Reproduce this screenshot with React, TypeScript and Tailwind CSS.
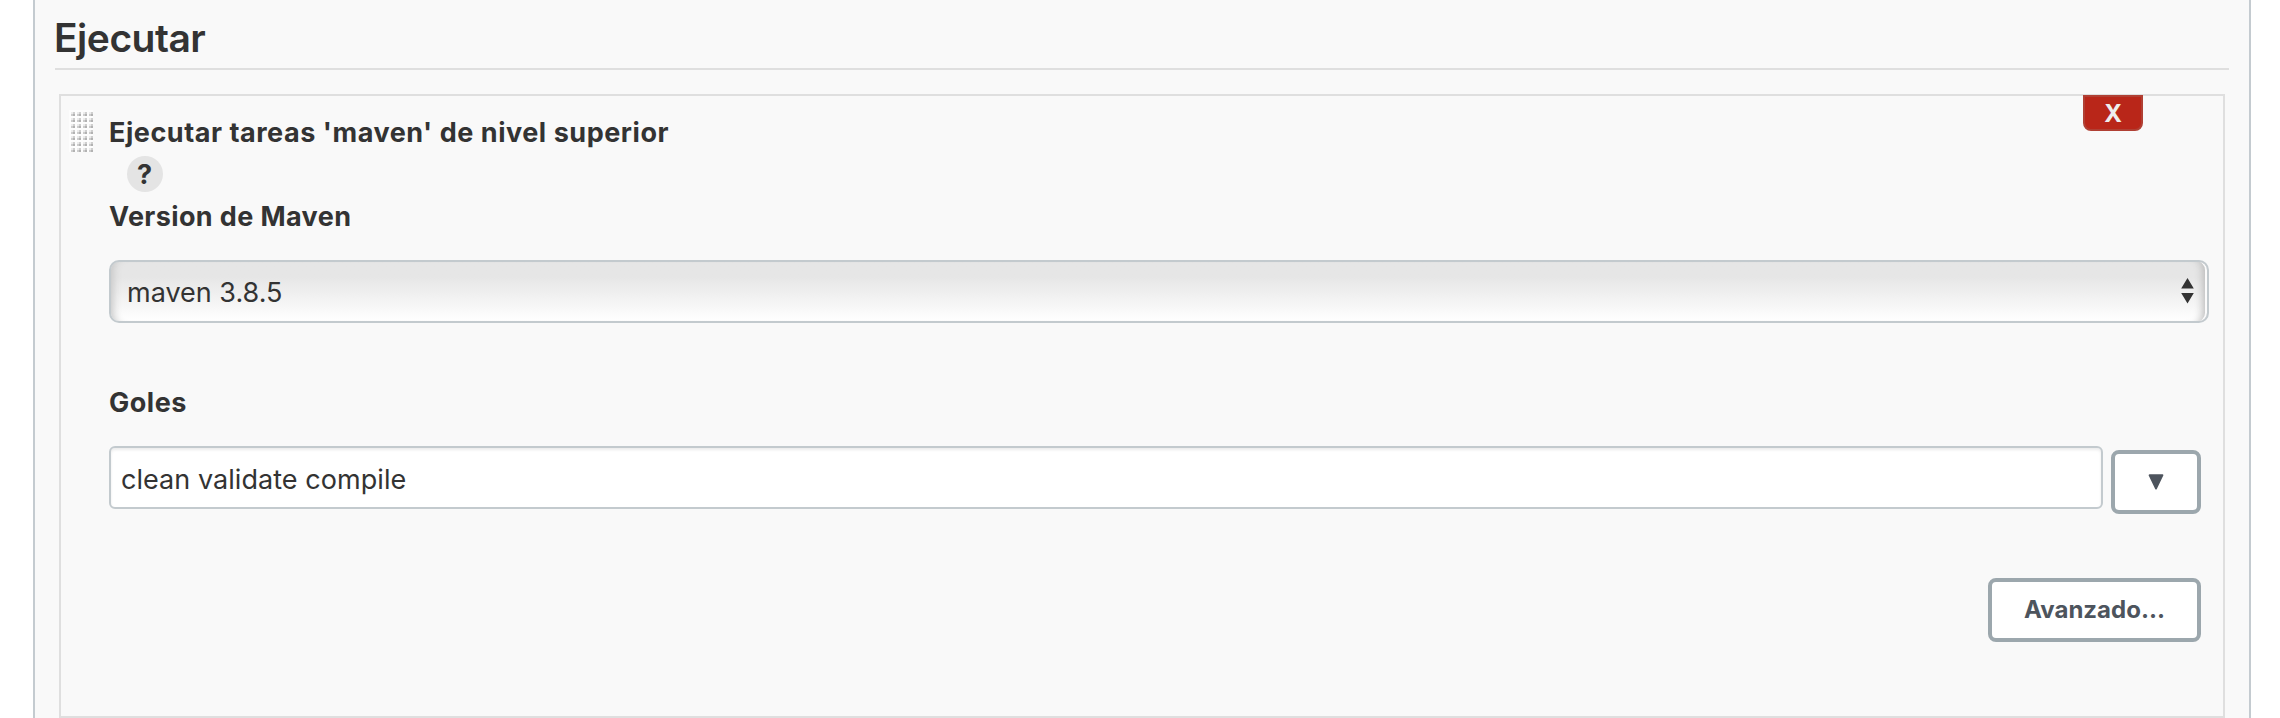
import React from "react";

function DragGrip() {
  return (
    <svg className="h-[42px] w-6 shrink-0" viewBox="0 0 24 42" shapeRendering="crispEdges">
      <defs>
        <pattern id="grip" width="6" height="6" patternUnits="userSpaceOnUse">
          <rect width="6" height="6" fill="#fdfdfd" />
          <rect x="4" y="2" width="2" height="2" fill="#cfcfcf" />
          <rect x="2" y="4" width="2" height="2" fill="#cdcdcd" />
          <rect x="2" y="2" width="2" height="2" fill="#ececec" />
          <rect x="4" y="4" width="2" height="2" fill="#b2b2b2" />
        </pattern>
      </defs>
      <rect width="24" height="42" fill="url(#grip)" />
    </svg>
  );
}

function Label({ children, className = "" }: { children: React.ReactNode; className?: string }) {
  return (
    <div className={`h-10 whitespace-nowrap pt-px text-[27px] leading-10 font-bold ${className}`}>{children}</div>
  );
}

export default function App() {
  return (
    <div className="flex h-[718px] w-[2280px] overflow-hidden bg-white pl-[33px] font-['Inter',sans-serif] text-[#333333]">
      <main className="h-full w-[2218px] border-x-2 border-[#c4cbd0] bg-[#f9f9f9] pl-5">
        <h2 className="h-[70px] w-[2174px] border-b-2 border-[#dfdfdf] pt-2 text-[39px] leading-[60px] font-semibold">
          <span className="-ml-px tracking-[-0.5px]">Ejecutar</span>
        </h2>

        <section className="mt-6 ml-1 flex h-[624px] w-[2166px] border-2 border-[#dfdfdf] pl-2">
          <div className="pt-[14px]">
            <DragGrip />
          </div>

          <div className="ml-4 w-[2100px] shrink-0">
            <header className="flex h-[60px] items-start justify-between pr-[66px]">
              <Label className="mt-4 tracking-[0.54px]">Ejecutar tareas 'maven' de nivel superior</Label>
              <button className="-mt-px h-9 w-[60px] rounded-b-lg border-2 border-[#b04034] bg-[#b92619] pt-px text-[24px] leading-[31px] font-bold text-[#eeeeee]">
                X
              </button>
            </header>

            <div className="ml-[18px] flex h-9 w-9 items-center justify-center rounded-full bg-[#e4e4e4] pt-px pr-px text-[27px] leading-9 font-bold">
              ?
            </div>

            <Label className="mt-1 tracking-[0.38px]">Version de Maven</Label>
            <div className="mt-6 flex h-[63px] items-center justify-between rounded-[10px] border-2 border-[#c3cace] bg-linear-to-b from-[#e6e6e6] from-25% to-white pr-[13px] pl-4 text-[27px] shadow-[inset_10px_0_8px_-8px_#c4c4c4,inset_-3px_0_0_-1px_#fbfbfb,inset_-12px_0_8px_-8px_#b8b8b8]">
              <span className="pt-1">maven 3.8.5</span>
              <svg className="-mt-px h-[26px] w-[13px]" viewBox="0 0 13 26">
                <path d="M6.5 0 12.8 10.5H.2Z M6.5 25.5 12.8 15H.2Z" fill="#333333" />
              </svg>
            </div>

            <Label className="mt-[59px] tracking-[0.5px]">Goles</Label>
            <div className="mt-6 flex items-start gap-2">
              <div className="flex h-[63px] w-[1994px] items-center rounded-md border-2 border-[#c3cace] bg-white pt-[6px] pl-[10px] text-[27px] tracking-[0.05px] shadow-[inset_0_2px_3px_rgba(0,0,0,0.08)]">
                <span>clean validate compile</span>
              </div>
              <button className="mt-1 flex h-16 w-[90px] items-center justify-center rounded-lg border-4 border-[#9ca7ad] bg-white">
                <svg className="h-4 w-4" viewBox="0 0 16 16">
                  <path d="M1.5 1.2h13L8 14.6Z" fill="#4d545d" stroke="#4d545d" strokeWidth="1.8" strokeLinejoin="round" />
                </svg>
              </button>
            </div>

            <div className="mt-16 flex justify-end pr-2">
              <button className="h-16 w-[213px] rounded-lg border-4 border-[#9ca7ad] bg-white text-[24px] leading-[56px] font-bold whitespace-nowrap text-[#4d545d]">
                Avanzado...
              </button>
            </div>
          </div>
        </section>
      </main>
    </div>
  );
}
